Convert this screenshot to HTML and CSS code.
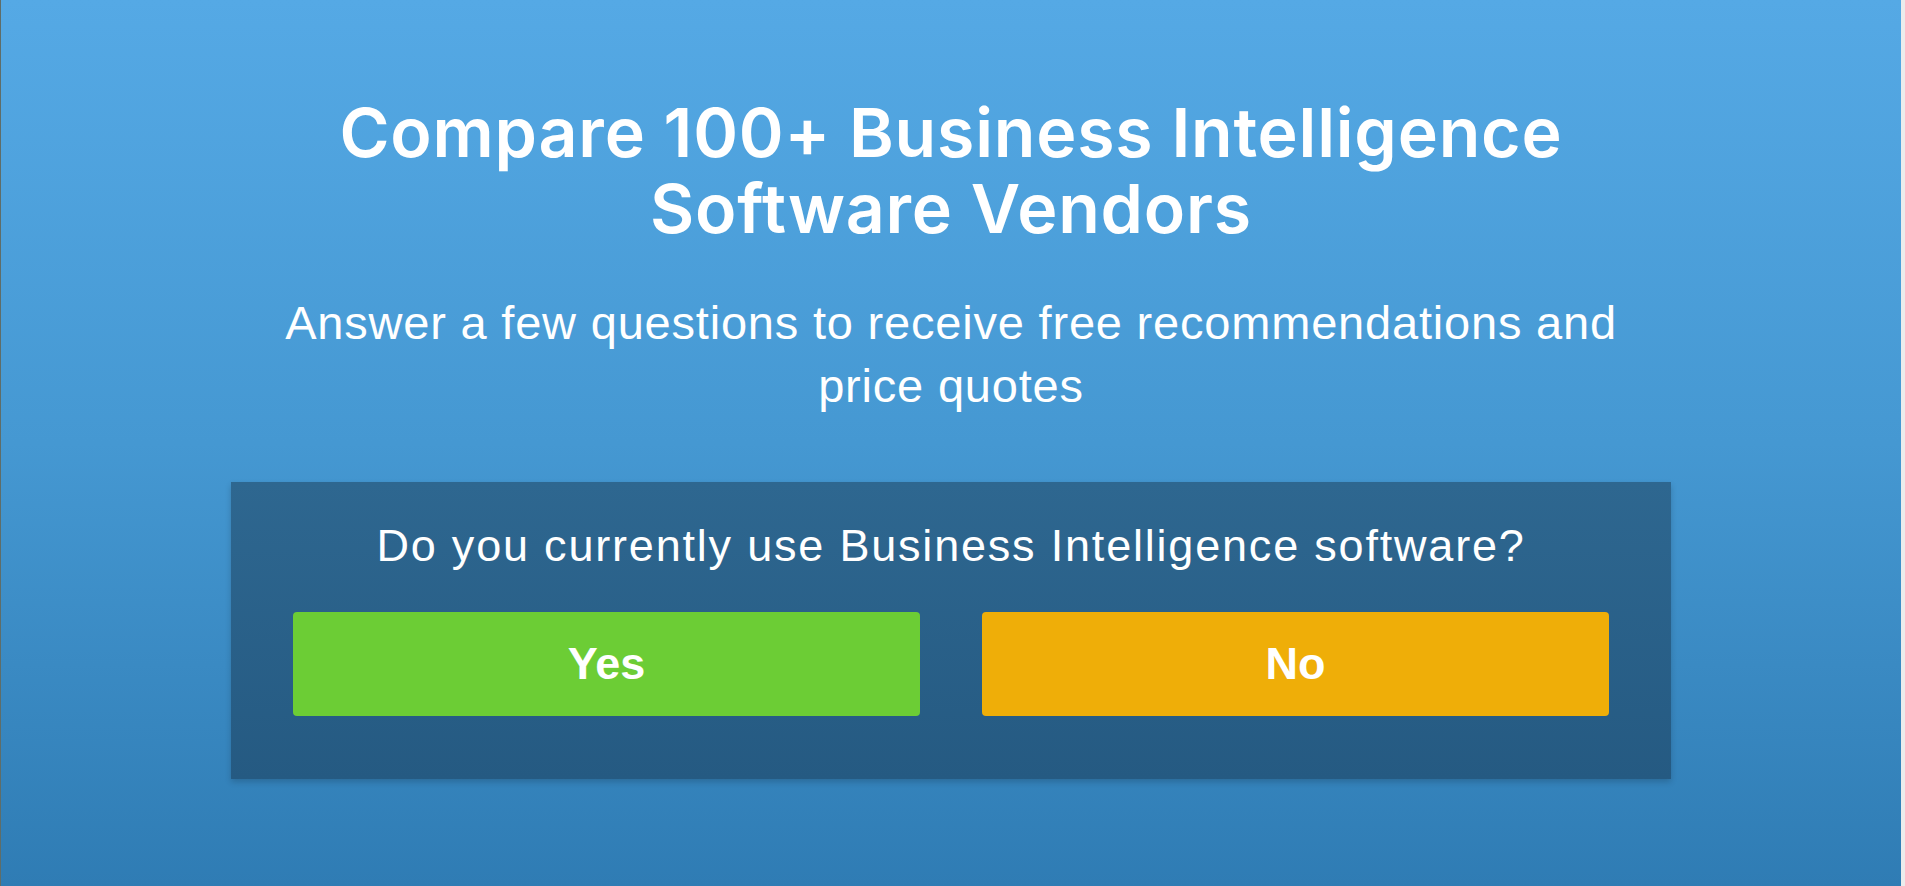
FILE: index.html
```html
<!DOCTYPE html>
<html lang="en">
<head>
    <meta charset="UTF-8">
    <meta name="viewport" content="width=device-width, initial-scale=1.0">
    <title>Compare Business Intelligence Software Vendors</title>
    <link rel="stylesheet" href="styles.css">
</head>
<body>
    <div class="page">
        <main class="hero">
            <h1 class="hero-title">Compare 100+ Business Intelligence<br>Software Vendors</h1>
            <p class="hero-sub">Answer a few questions to receive free recommendations and<br>price quotes</p>

            <section class="quiz">
                <h2 class="quiz-question">Do you currently use Business Intelligence software?</h2>
                <div class="quiz-buttons">
                    <button class="btn btn-yes">Yes</button>
                    <button class="btn btn-no">No</button>
                </div>
            </section>
        </main>
    </div>
</body>
</html>
```

FILE: styles.css
```css
html {
    background: #ececec;
}
body {
    margin: 0;
    font-family: "Liberation Sans", Arial, sans-serif;
    color: #fff;
}
.page {
    display: flex;
    height: 886px;
    overflow: hidden;
}
.hero {
    flex: none;
    width: 1901px;
    border-left: 1px solid #5f6d68;
    background: linear-gradient(to bottom, #55a9e5 0%, #4598d2 50%, #2f7cb4 100%);
    display: flex;
    flex-direction: column;
    align-items: center;
    padding-top: 94px;
    box-sizing: border-box;
}
.hero-title {
    margin: 0;
    font-family: Inter, "Noto Sans", sans-serif;
    font-weight: 600;
    font-size: 68px;
    letter-spacing: 0.8px;
    line-height: 76px;
    text-align: center;
}
.hero-sub {
    margin: 45px 0 0;
    font-size: 47px;
    letter-spacing: 0.8px;
    line-height: 63px;
    text-align: center;
}
.quiz {
    margin-top: 65px;
    width: 1440px;
    box-sizing: border-box;
    padding: 37px 62px 63px;
    background: linear-gradient(to bottom, #2e6790, #255a82);
    box-shadow: 0 3px 6px rgba(0, 0, 0, 0.18);
}
.quiz-question {
    margin: 0;
    font-size: 45px;
    font-weight: normal;
    letter-spacing: 1.8px;
    line-height: 53px;
    text-align: center;
}
.quiz-buttons {
    display: flex;
    gap: 62px;
    margin-top: 40px;
}
.btn {
    flex: 1;
    height: 104px;
    border: none;
    border-radius: 4px;
    font-family: "Liberation Sans", Arial, sans-serif;
    font-size: 45px;
    font-weight: bold;
    color: #fff;
    cursor: pointer;
}
.btn-yes { background: #6ccd35; }
.btn-no { background: #efae08; }
```
